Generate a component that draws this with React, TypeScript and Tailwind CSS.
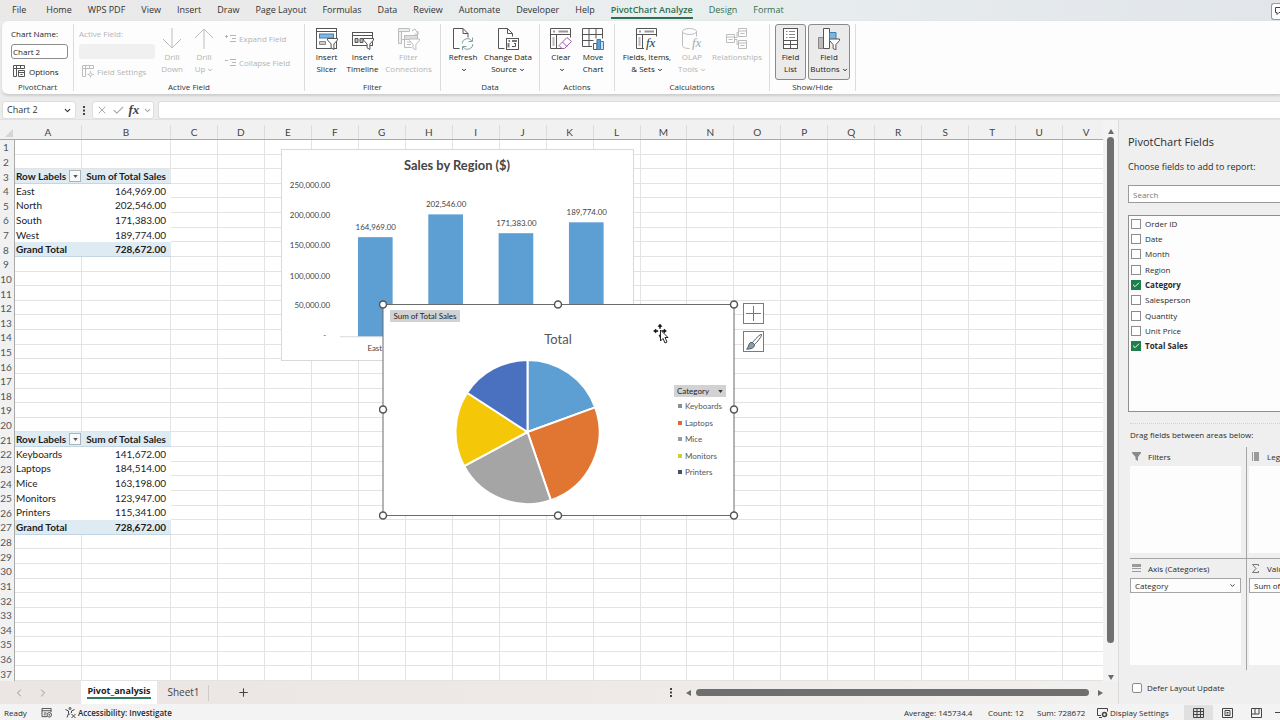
import { useState } from 'react'
import type { ReactNode } from 'react'
import clsx from 'clsx'
import { Check, ChevronDown, ChevronLeft, ChevronRight, Plus, X } from 'lucide-react'

const RIBBON_TABS = [
  'File', 'Home', 'WPS PDF', 'View', 'Insert', 'Draw', 'Page Layout', 'Formulas', 'Data',
  'Review', 'Automate', 'Developer', 'Help', 'PivotChart Analyze', 'Design', 'Format',
]
const CONTEXT_TABS = ['PivotChart Analyze', 'Design', 'Format']

const COLUMNS = 'ABCDEFGHIJKLMNOPQRSTUV'.split('')
const ROWS = Array.from({ length: 37 }, (_, i) => i + 1)

interface PivotRow {
  kind: 'head' | 'body' | 'total'
  label: string
  value: string
}

const PIVOT_ROWS: Record<number, PivotRow> = {
  3: { kind: 'head', label: 'Row Labels', value: 'Sum of Total Sales' },
  4: { kind: 'body', label: 'East', value: '164,969.00' },
  5: { kind: 'body', label: 'North', value: '202,546.00' },
  6: { kind: 'body', label: 'South', value: '171,383.00' },
  7: { kind: 'body', label: 'West', value: '189,774.00' },
  8: { kind: 'total', label: 'Grand Total', value: '728,672.00' },
  21: { kind: 'head', label: 'Row Labels', value: 'Sum of Total Sales' },
  22: { kind: 'body', label: 'Keyboards', value: '141,672.00' },
  23: { kind: 'body', label: 'Laptops', value: '184,514.00' },
  24: { kind: 'body', label: 'Mice', value: '163,198.00' },
  25: { kind: 'body', label: 'Monitors', value: '123,947.00' },
  26: { kind: 'body', label: 'Printers', value: '115,341.00' },
  27: { kind: 'total', label: 'Grand Total', value: '728,672.00' },
}

const REGIONS = [
  { name: 'East', value: 164969 },
  { name: 'North', value: 202546 },
  { name: 'South', value: 171383 },
  { name: 'West', value: 189774 },
]

const CATEGORIES = [
  { name: 'Keyboards', value: 141672, color: '#5e9fd3', key: '#8a8f96' },
  { name: 'Laptops', value: 184514, color: '#e07632', key: '#dd6b2f' },
  { name: 'Mice', value: 163198, color: '#a5a5a5', key: '#9a9a9a' },
  { name: 'Monitors', value: 123947, color: '#f5c709', key: '#cfd02c' },
  { name: 'Printers', value: 115341, color: '#4a70c0', key: '#4a4f62' },
]

const FIELDS = [
  'Order ID', 'Date', 'Month', 'Region', 'Category', 'Salesperson', 'Quantity', 'Unit Price', 'Total Sales',
]

const money = (n: number) => n.toLocaleString('en-US', { minimumFractionDigits: 2 })

/* ---------- Ribbon icons ---------- */

function Icon({ children, className = 'w-[22px] h-[22px]' }: { children: ReactNode; className?: string }) {
  return (
    <svg viewBox="0 0 22 22" fill="none" stroke="#555" className={className} aria-hidden="true">
      {children}
    </svg>
  )
}

const Funnel = ({ x, y, fill = '#fff' }: { x: number; y: number; fill?: string }) => (
  <path d={`M${x} ${y}h10v1.5l-3.6 4v5.5l-2.8-1.6v-3.9l-3.6-4z`} fill={fill} />
)

const SlicerIcon = () => (
  <Icon>
    <rect x=".5" y=".5" width="20" height="20" fill="#fff" />
    <path d="M.5 3.5h20" />
    <rect x="3.5" y="6" width="14" height="4" fill="#83b9e0" stroke="#3c7fb5" />
    <path d="M3.500 13.500h6v3h-6z" fill="#ccc" stroke="#888" />
    <Funnel x={11.5} y={10.5} />
  </Icon>
)

const TimelineIcon = () => (
  <Icon>
    <rect x=".5" y="4.5" width="20" height="13" fill="#fff" />
    <path d="M.5 7.5h20" />
    <path d="M3 10.5h3v4H3zM8 10.5h3v4H8z" fill="#bbb" />
    <path d="M13 10.5h2" />
    <Funnel x={11.5} y={10.5} />
  </Icon>
)

const ConnectionsIcon = () => (
  <Icon>
    <g stroke="#bdbdbd">
      <path d="M.5.5h11v3H.5zM.5 3.5v12h3v-12M7 11.5h-3" fill="#eee" />
      <path d="M14 3l3-2 3 5M20 3v3.500l-3.500-.5" />
      <rect x="6.500" y="7.500" width="13" height="4" fill="#ddd" />
      <path d="M6.500 11.500v8h7M9 14h4M9 16.500h4" />
      <Funnel x={11.5} y={11} />
    </g>
  </Icon>
)

const RefreshIcon = () => (
  <Icon>
    <path d="M7.500 20.500h-6V.5h9.500l5 5v4M11 .5v5h5" />
    <path d="M10 15.500a5.500 5.500 0 0 1 10-2.500M20.500 9.500v4h-4M21 16a5.500 5.500 0 0 1-10 3M10.500 22v-3.500h4" stroke="#7fa3a3" />
  </Icon>
)

const ChangeSourceIcon = () => (
  <Icon>
    <path d="M7.500 20.500h-6V.5h9l5 5v3M10.500.5v5h5" />
    <rect x="9.500" y="10.500" width="12" height="11" fill="#fff" />
    <path d="M11.500 13h1.500M15 13h5M11.500 15v4.500" stroke="#777" strokeWidth="2" />
    <path d="M15 18.500h3.500v-3M17 15.500h2" />
  </Icon>
)

const ClearIcon = () => (
  <Icon>
    <path d="M12 20.500H.5V.5h20v9M.5 6.500h20M6.500 6.500v14" />
    <path d="M3 3.500h2M8.500 3.500h9.500" stroke="#999" strokeWidth="2" />
    <path d="M3.500 9v9" stroke="#bbb" strokeWidth="2" />
    <path d="M10 16.500l7-7 4.500 4-7 7h-2.500l-3-3zM12.500 14l4.500 4.500" fill="#fff" stroke="#9d5cab" />
  </Icon>
)

const MoveChartIcon = () => (
  <Icon>
    <path d="M10 18.500H.5V.5h20v10M.5 6.500h20M.5 12.500h11M7 .5v18M14 .5v10" />
    <path d="M11.500 15.500h3.500v6h-3.500z" fill="#fff" />
    <path d="M15 11.500h3.500v10H15z" fill="#5e9fd3" stroke="#3c7fb5" />
    <path d="M18.500 13.500h3v8h-3z" fill="#cde3f3" stroke="#3c7fb5" />
  </Icon>
)

const FxMark = ({ x, y, color = '#333' }: { x: number; y: number; color?: string }) => (
  <text x={x} y={y} stroke="none" fill={color} className="font-['Liberation_Serif',serif] text-[13px] italic">
    fx
  </text>
)

const FieldsItemsIcon = () => (
  <Icon>
    <path d="M8 20.500H.5V.5h20v8M.5 6.500h20M6.500 6.500v14" />
    <path d="M3 3.500h2M8.500 3.500h9.500" stroke="#999" strokeWidth="2" />
    <path d="M3.500 9v9" stroke="#bbb" strokeWidth="2" />
    <FxMark x={10} y={19} />
  </Icon>
)

const OlapIcon = () => (
  <Icon>
    <g stroke="#bdbdbd">
      <ellipse cx="8.500" cy="3.500" rx="7" ry="3" />
      <path d="M1.500 3.500v14c0 2 3 3 7 3M15.500 3.500v5" />
    </g>
    <FxMark x={11} y={19} color="#aaa" />
  </Icon>
)

const RelationshipsIcon = () => (
  <Icon>
    <g stroke="#bdbdbd">
      <path d="M.5 6.500h8v8h-8zM.5 9h8M12.500.5h8v8h-8zM12.500 3h8M12.500 12.500h8v8h-8zM12.500 15h8M8.500 9.500H11V4.500h1.500M8.500 11.500H11v5h1.500" />
      <path d="M2.500 11.500h4M14.500 5.500h4M14.500 17.500h4" />
    </g>
  </Icon>
)

const FieldListIcon = () => (
  <Icon>
    <rect x="3.500" y=".5" width="14" height="20" fill="#fff" />
    <path d="M3.500 12.500h14M3.500 16.500h14M10.500 12.500v8" />
    <path d="M6 3.500h1.500M9 3.500h6M6 6.500h1.500M9 6.500h6M6 9.500h1.500M9 9.500h6" stroke="#888" />
  </Icon>
)

const FieldButtonsIcon = () => (
  <Icon>
    <path d="M.5 9.500h5v11h-5z" fill="#bbb" stroke="#888" />
    <path d="M5.500.5h6v20h-6z" fill="#fff" />
    <path d="M11.500 4.500h6.500v8h-6.500z" fill="#7db4dd" stroke="#3c7fb5" />
    <Funnel x={11.5} y={11} />
  </Icon>
)

const DrillIcon = ({ up }: { up?: boolean }) => (
  <Icon>
    <path d={up ? 'M11 21V1M2 10l9-9 9 9' : 'M11 0v20M2 11l9 9 9-9'} stroke="#bdbdbd" />
  </Icon>
)

const OptionsIcon = ({ muted, gear }: { muted?: boolean; gear?: boolean }) => (
  <svg viewBox="0 0 13 13" fill="none" stroke={muted ? '#bdbdbd' : '#555'} className="size-[13px]" aria-hidden="true">
    <path d="M.5.5h11v3H.5zM.5 3.500v8h3v-8M3.500.5v3M7.500.5v3" />
    {gear ? (
      <path d="M8.500 6v1.500M8.500 11v1.500M5.500 9.500H7M10.500 9.500H12M7 9.500a1.500 1.500 0 1 0 3 0a1.500 1.500 0 1 0-3 0z" />
    ) : (
      <path d="M5.500 5.500h6v6h-6zM5.500 7.500h6M7.500 9.500h2" />
    )}
  </svg>
)

const ExpandIcon = ({ plus }: { plus?: boolean }) => (
  <svg viewBox="0 0 11 9" fill="none" stroke="#b5b5b5" className="h-[9px] w-[11px]" aria-hidden="true">
    <path d="M0 2.500h3M5 1.500h6M7 4.500h4M5 7.500h6" />
    {plus && <path d="M1.500 1v3" />}
  </svg>
)

/* ---------- Ribbon ---------- */

interface RibbonButtonProps {
  icon: ReactNode
  lines: [string, string?]
  width: string
  menu?: boolean
  disabled?: boolean
  pressed?: boolean
}

function RibbonButton({ icon, lines, width, menu, disabled, pressed }: RibbonButtonProps) {
  const arrow = menu && <ChevronDown className="ml-0.5 inline size-[6px]" strokeWidth={4} />
  return (
    <button
      type="button"
      disabled={disabled}
      aria-pressed={pressed}
      className={clsx(
        'flex h-14 flex-col items-center rounded-[3px] border pt-[3px] whitespace-nowrap',
        width,
        pressed ? 'border-[#8a8a8a] bg-[#ebebeb]' : 'border-transparent',
        disabled ? 'text-[#b4b4b4]' : 'text-[#222]',
      )}
    >
      {icon}
      <span className="mt-px block leading-[12px]">{lines[0]}</span>
      <span className="block leading-[12px]">
        {lines[1]}
        {arrow}
      </span>
    </button>
  )
}

function RibbonGroup({ label, width, children }: { label: string; width: string; children: ReactNode }) {
  return (
    <section aria-label={label} className={clsx('flex shrink-0 flex-col py-[3px]', width)}>
      <div className="flex h-full flex-col border-r border-[#dcdcdc]">
        <div className="flex h-14 shrink-0 justify-center">{children}</div>
        <p className="text-center leading-[13px] text-[#333]">{label}</p>
      </div>
    </section>
  )
}

function Ribbon() {
  return (
    <div className="ml-0.5 flex h-[74px] shrink-0 rounded-l-md border-b border-[#cfcfcf] bg-[#fdfdfd] text-[8px] font-medium shadow-sm">
      <RibbonGroup label="PivotChart" width="w-[72px]">
        <div className="flex w-full flex-col pt-1 pl-[9px] text-[#222]">
          <label htmlFor="chart-name" className="leading-[12px]">Chart Name:</label>
          <input
            id="chart-name"
            defaultValue="Chart 2"
            className="mt-1 h-[15px] w-[57px] rounded-[3px] border border-[#8c8c8c] bg-white px-px"
          />
          <button type="button" className="mt-1.5 flex items-center gap-[3px] pl-0.5 leading-[13px]">
            <OptionsIcon /> Options
          </button>
        </div>
      </RibbonGroup>

      <RibbonGroup label="Active Field" width="w-[231px]">
        <div className="flex w-[82px] flex-col pt-1 pl-[5px] text-[#b4b4b4]">
          <label htmlFor="active-field" className="leading-[12px]">Active Field:</label>
          <input id="active-field" disabled className="mt-1 h-[15px] w-[76px] rounded-[3px] bg-[#f0f0f0]" />
          <button type="button" disabled className="mt-1.5 flex items-center gap-0.5 pl-[3px] leading-[13px] whitespace-nowrap">
            <OptionsIcon muted gear /> Field Settings
          </button>
        </div>
        <RibbonButton icon={<DrillIcon />} lines={['Drill', 'Down']} width="w-8" disabled />
        <RibbonButton icon={<DrillIcon up />} lines={['Drill', 'Up']} width="w-8" menu disabled />
        <div className="flex flex-1 flex-col gap-[11px] pt-2 pl-[5px] text-[#b4b4b4]">
          <button type="button" disabled className="flex items-center gap-[3px] leading-[13px] whitespace-nowrap">
            <ExpandIcon plus /> Expand Field
          </button>
          <button type="button" disabled className="flex items-center gap-[3px] leading-[13px] whitespace-nowrap">
            <ExpandIcon /> Collapse Field
          </button>
        </div>
      </RibbonGroup>

      <RibbonGroup label="Filter" width="w-[136px]">
        <RibbonButton icon={<SlicerIcon />} lines={['Insert', 'Slicer']} width="w-9" />
        <RibbonButton icon={<TimelineIcon />} lines={['Insert', 'Timeline']} width="w-9" />
        <RibbonButton icon={<ConnectionsIcon />} lines={['Filter', 'Connections']} width="w-14" disabled />
      </RibbonGroup>

      <RibbonGroup label="Data" width="w-[99px]">
        <RibbonButton icon={<RefreshIcon />} lines={['Refresh']} width="w-9" menu />
        <RibbonButton icon={<ChangeSourceIcon />} lines={['Change Data', 'Source']} width="w-[54px]" menu />
      </RibbonGroup>

      <RibbonGroup label="Actions" width="w-[75px]">
        <RibbonButton icon={<ClearIcon />} lines={['Clear']} width="w-8" menu />
        <RibbonButton icon={<MoveChartIcon />} lines={['Move', 'Chart']} width="w-8" />
      </RibbonGroup>

      <RibbonGroup label="Calculations" width="w-[155px]">
        <RibbonButton icon={<FieldsItemsIcon />} lines={['Fields, Items,', '& Sets']} width="w-[54px]" menu />
        <RibbonButton icon={<OlapIcon />} lines={['OLAP', 'Tools']} width="w-9" menu disabled />
        <RibbonButton icon={<RelationshipsIcon />} lines={['Relationships']} width="w-[54px]" disabled />
      </RibbonGroup>

      <RibbonGroup label="Show/Hide" width="w-[86px]">
        <div className="flex gap-0.5">
          <RibbonButton icon={<FieldListIcon />} lines={['Field', 'List']} width="w-[31px]" pressed />
          <RibbonButton icon={<FieldButtonsIcon />} lines={['Field', 'Buttons']} width="w-[42px]" menu pressed />
        </div>
      </RibbonGroup>
    </div>
  )
}

function FormulaBar() {
  return (
    <div className="flex h-[25px] shrink-0 items-end border-b border-[#e2e2e2] pl-0.5 text-[9px] text-[#333]">
      <div className="flex h-[18px] w-[74px] items-center rounded-[3px] border border-[#dedede] bg-white pr-[3px]">
        <input aria-label="Name Box" defaultValue="Chart 2" className="w-full min-w-0 flex-1 bg-transparent pl-1" />
        <button type="button" aria-label="Open name list">
          <ChevronDown className="size-[9px]" strokeWidth={3} />
        </button>
      </div>
      <span className="flex h-[18px] w-4 items-center justify-center" aria-hidden="true">
        <Dots />
      </span>
      <div className="flex h-[18px] w-[62px] items-center justify-between rounded-[3px] border border-[#dedede] bg-white pr-px pl-[3px] text-[#aaa]">
        <button type="button" aria-label="Cancel"><X className="size-[12px]" strokeWidth={2} /></button>
        <button type="button" aria-label="Enter"><Check className="size-[13px]" strokeWidth={2} /></button>
        <button type="button" className="font-['Liberation_Serif',serif] text-[13px] font-bold text-[#444] italic">
          fx
        </button>
        <button type="button" aria-label="Recent functions"><ChevronDown className="size-[9px]" strokeWidth={3} /></button>
      </div>
      <input
        aria-label="Formula Bar"
        className="ml-1 h-[18px] min-w-0 flex-1 rounded-l-[3px] border border-r-0 border-[#dedede] bg-white px-1"
      />
    </div>
  )
}

const Dots = () => (
  <svg viewBox="0 0 2 9" className="h-[9px] w-[2px]" fill="#444">
    <path d="M0 0h2v2H0zM0 3.500h2v2H0zM0 7h2v2H0z" />
  </svg>
)

/* ---------- Worksheet ---------- */

const TRACKS =
  'grid grid-cols-[15px_67px_89px_repeat(20,minmax(0,1fr))]'

function SheetRow({ row }: { row: number }) {
  const pivot = PIVOT_ROWS[row]
  const tinted = pivot && pivot.kind !== 'body'
  const cell = pivot
    ? clsx(
        'flex items-center border-b leading-none whitespace-nowrap text-[#1c1c1c]',
        tinted ? 'border-[#c3d6e3] bg-[#dfebf3] font-bold' : 'border-transparent',
      )
    : 'border-r border-b border-[#e3e3e3]'
  return (
    <tr className={TRACKS}>
      <th scope="row" className="flex items-center justify-center border-r border-[#a9a9a9] bg-[#f1f1f1] pr-0.5 leading-none font-normal text-[#555]">
        {row}
      </th>
      <td className={clsx(cell, pivot && 'pl-px')}>
        {pivot?.label}
        {pivot?.kind === 'head' && (
          <button
            type="button"
            aria-label="Filter row labels"
            className="mr-px ml-auto flex size-3 items-center justify-center border border-[#a9b4bb] bg-[#f7f9fa]"
          >
            <svg viewBox="0 0 6 4" className="h-[3px] w-[5px]" fill="#555"><path d="M0 0h6L3 4z" /></svg>
          </button>
        )}
      </td>
      <td className={clsx(cell, pivot && 'justify-end pr-[5px]')}>{pivot?.value}</td>
      {COLUMNS.slice(2).map((c) => (
        <td key={c} className="border-r border-b border-[#e3e3e3]" />
      ))}
    </tr>
  )
}

function Worksheet() {
  return (
    <table className="flex h-full w-[calc(100%+7px)] flex-col bg-white font-['Lato',sans-serif] text-[10px]">
      <thead className="block h-5 shrink-0 border-b border-[#a9a9a9] bg-[#f1f1f1]">
        <tr className={clsx(TRACKS, 'h-full pt-[5px]')}>
          <th className="flex items-end justify-end p-0.5">
            <svg viewBox="0 0 8 8" className="size-2" fill="#d5d5d5"><path d="M8 0v8H0z" /></svg>
          </th>
          {COLUMNS.map((c) => (
            <th key={c} scope="col" className="flex items-center justify-center border-r border-[#dcdcdc] leading-none font-normal text-[#444]">
              {c}
            </th>
          ))}
        </tr>
      </thead>
      <tbody className="grid min-h-0 flex-1 auto-rows-fr">
        {ROWS.map((row) => (
          <SheetRow key={row} row={row} />
        ))}
      </tbody>
    </table>
  )
}

function RegionChart() {
  const baseline = 188
  const scale = 123 / 202546
  return (
    <svg
      viewBox="0 0 353 212"
      role="img"
      aria-label="Sales by Region"
      className="absolute top-[29px] left-[281px] h-[212px] w-[353px] border border-[#d9d9d9] bg-white font-['Lato',sans-serif] text-[8px]"
      fill="#444"
    >
      <text x="176" y="20" textAnchor="middle" className="text-[13px] font-bold">Sales by Region ($)</text>
      {[250000, 200000, 150000, 100000, 50000].map((tick, i) => (
        <text key={tick} x="48" y={38 + Math.round(i * 30.6)} textAnchor="end">{money(tick)}</text>
      ))}
      <text x="44" y="190" textAnchor="end">-</text>
      <path d={`M58 ${baseline + 0.5}H340`} stroke="#d9d9d9" />
      {REGIONS.map((region, i) => {
        const h = Math.round(region.value * scale)
        const x = 76 + i * 71
        return (
          <g key={region.name}>
            <rect x={x} y={baseline - h} width="35" height={h} fill="#5e9fd3" />
            <text x={x + 18} y={baseline - h - 7} textAnchor="middle">{money(region.value)}</text>
            <text x={x + 17} y="203" textAnchor="middle">{region.name}</text>
          </g>
        )
      })}
    </svg>
  )
}

function pieSlices(cx: number, cy: number, r: number) {
  const total = CATEGORIES.reduce((sum, c) => sum + c.value, 0)
  let angle = -Math.PI / 2
  return CATEGORIES.map((c) => {
    const start = angle
    angle += (c.value / total) * Math.PI * 2
    const point = (a: number) => `${cx + r * Math.cos(a)} ${cy + r * Math.sin(a)}`
    return { ...c, d: `M${cx} ${cy}L${point(start)}A${r} ${r} 0 0 1 ${point(angle)}Z` }
  })
}

const HANDLES = [
  [4, 4], [179, 4], [355, 4], [4, 109], [355, 109], [4, 215], [179, 215], [355, 215],
]

function CategoryChart() {
  return (
    <div className="absolute top-[180px] left-[379px] flex items-start gap-1 font-['Lato',sans-serif]">
      <div className="relative">
        <svg viewBox="0 0 360 220" role="img" aria-label="Total by category" className="h-[220px] w-[360px]" fill="#555">
          <rect x="4" y="4.500" width="351" height="211" fill="#fff" stroke="#6b6b6b" />
          <text x="179" y="44" textAnchor="middle" className="text-[13px]">Total</text>
          {pieSlices(148.5, 132, 72).map((s) => (
            <path key={s.name} d={s.d} fill={s.color} stroke="#fff" strokeWidth="2" strokeLinejoin="round" />
          ))}
          {CATEGORIES.map((c, i) => (
            <g key={c.name}>
              <rect x="299" y={104 + Math.round(i * 16.5)} width="4" height="4" fill={c.key} />
              <text x="306" y={109 + Math.round(i * 16.5)} className="text-[8px]">{c.name}</text>
            </g>
          ))}
          {HANDLES.map(([x, y]) => (
            <circle key={`${x}-${y}`} cx={x} cy={y + 0.5} r="3.5" fill="#fff" stroke="#555" strokeWidth="1.5" />
          ))}
        </svg>
        <button type="button" className="absolute top-[10px] left-[11px] h-3 w-[70px] bg-[#d2d2d2] text-[8px] leading-3 whitespace-nowrap text-[#222]">
          Sum of Total Sales
        </button>
        <button
          type="button"
          className="absolute top-[85px] left-[295px] flex h-3 w-[52px] items-center justify-between bg-[#d2d2d2] px-[3px] text-[8px] leading-3 text-[#222]"
        >
          Category
          <svg viewBox="0 0 6 4" className="h-[3px] w-[5px]" fill="#333"><path d="M0 0h6L3 4z" /></svg>
        </button>
        {/* Move pointer */}
        <svg viewBox="0 0 16 20" className="absolute top-6 left-[274px] h-5 w-4" aria-hidden="true">
          <path d="M7 0l2 2.500H5zM.5 7L3 5v4zM13.500 7L11 5v4zM6.500 2h1v2.500h-1zM3 6.500h2v1H3zM9 6.500h2v1H9zM6 11h2l-1 2.500z" fill="#111" stroke="#111" strokeWidth=".5" />
          <path d="M7.500 6v11l2.500-2.500 2 4.500 2-1-2-4.500h3z" fill="#fff" stroke="#222" />
        </svg>
      </div>
      <div className="flex flex-col gap-[7px] pt-[3px]">
        <button type="button" aria-label="Chart elements" className="flex size-[21px] items-center justify-center border border-[#7b7b7b] bg-white">
          <svg viewBox="0 0 15 15" className="size-[15px]" stroke="#777"><path d="M7.500 0v15M0 7.500h15" /></svg>
        </button>
        <button type="button" aria-label="Chart styles" className="flex size-[21px] items-center justify-center border border-[#7b7b7b] bg-white">
          <svg viewBox="0 0 18 18" className="size-[18px]" fill="none" stroke="#555">
            <path d="M16.500 1.500c1 1-5 8.500-7 10l-2-2c1.500-2 8-9 9-8z" fill="#fff" />
            <path d="M7.500 9.500l2 2c.5 3-3.500 5-8 4.500 2.500-1 1.500-5 4-6.500z" fill="#7f9fb8" />
          </svg>
        </button>
      </div>
    </div>
  )
}

const Arrow = ({ d }: { d: string }) => (
  <svg viewBox="0 0 6 6" className="size-1.5 shrink-0" fill="#6b6b6b" aria-hidden="true"><path d={d} /></svg>
)

function SheetTabs() {
  return (
    <div className="flex h-[23px] shrink-0 items-center bg-linear-to-r from-[#ebe6e4] via-[#eee9e6] to-[#f2f0ee] text-[10px]">
      <div className="flex w-[81px] items-center gap-3 pl-[13px] text-[#999]">
        <button type="button" aria-label="Previous sheet"><ChevronLeft className="size-3" /></button>
        <button type="button" aria-label="Next sheet"><ChevronRight className="size-3" /></button>
      </div>
      <button type="button" className="flex h-full w-[76px] justify-center bg-white pt-[3px] text-[9px] font-bold text-[#222]">
        <span className="h-[15px] border-b-2 border-[#2f7d5c] leading-[14px]">Pivot_analysis</span>
      </button>
      <button type="button" className="h-4 w-[52px] border-r border-[#cfcbc8] pl-0.5 text-[#444]">Sheet1</button>
      <button type="button" aria-label="New sheet" className="ml-7 text-[#444]">
        <Plus className="size-[13px]" strokeWidth={2} />
      </button>
      <div className="ml-auto flex w-[448px] items-center gap-1">
        <Dots />
        <span className="ml-2.5 flex"><Arrow d="M5 0v6L0 3z" /></span>
        <span className="h-[7px] w-[393px] rounded-full bg-[#6f6f6f]" />
        <span className="ml-1 flex"><Arrow d="M1 0v6l5-3z" /></span>
      </div>
    </div>
  )
}

/* ---------- PivotChart Fields pane ---------- */

function FieldCheck({ label, checked, onChange }: { label: string; checked: boolean; onChange: () => void }) {
  return (
    <label className={clsx('flex items-center gap-1 leading-none', checked && 'font-bold')}>
      <span className="grid size-[10px]">
        <input
          type="checkbox"
          checked={checked}
          onChange={onChange}
          className="peer col-start-1 row-start-1 size-[10px] appearance-none border border-[#8c8c8c] bg-white checked:border-[#1e7e4c] checked:bg-[#1e7e4c]"
        />
        <Check className="pointer-events-none invisible col-start-1 row-start-1 size-[10px] p-px text-white peer-checked:visible" strokeWidth={3} />
      </span>
      {label}
    </label>
  )
}

interface AreaProps {
  title: string
  icon: ReactNode
  field?: string
  className?: string
}

function Area({ title, icon, field, className }: AreaProps) {
  return (
    <section className={clsx('flex flex-col pr-[5px] pb-[5px]', className)}>
      <h3 className="flex h-[19px] items-center gap-[7px] pl-0.5 whitespace-nowrap">
        <svg viewBox="0 0 9 9" className="size-[9px]" aria-hidden="true">{icon}</svg>
        {title}
      </h3>
      <div className="h-[87px] bg-[#fdfdfd]">
        {field && (
          <div className="flex h-[15px] items-center border border-[#a5a5a5] pr-1">
            <select aria-label={title} className="h-[13px] min-w-0 flex-1 appearance-none pl-1 leading-[13px]">
              <option>{field}</option>
            </select>
            <ChevronDown className="size-[7px]" strokeWidth={3} />
          </div>
        )}
      </div>
    </section>
  )
}

function FieldsPane() {
  const [picked, setPicked] = useState(['Category', 'Total Sales'])
  const [deferred, setDeferred] = useState(false)

  const toggle = (field: string) => {
    setPicked(picked.includes(field) ? picked.filter((f) => f !== field) : [...picked, field])
  }

  return (
    <aside className="flex w-[162px] shrink-0 flex-col overflow-hidden border-l border-[#dcdcdc] bg-[#efefef] pl-[9px] text-[8px] font-medium text-[#2b2b2b]">
      <h2 className="mt-[14px] text-[11px] leading-[16px] font-medium">PivotChart Fields</h2>
      <p className="mt-[10px] text-[9px] leading-[13px]">Choose fields to add to report:</p>
      <input
        type="search"
        aria-label="Search fields"
        placeholder="Search"
        className="mt-3 h-[18px] shrink-0 border border-r-0 border-[#9a9a9a] bg-white px-1 placeholder:text-[#777]"
      />
      <div className="mt-3 h-[197px] shrink-0 border border-r-0 border-[#8f8f8f] bg-[#fdfdfd]">
        <div className="grid h-[138px] auto-rows-fr pl-0.5">
          {FIELDS.map((field) => (
            <FieldCheck key={field} label={field} checked={picked.includes(field)} onChange={() => toggle(field)} />
          ))}
        </div>
      </div>

      <p className="mt-[11px] ml-0.5 border-t border-dotted border-[#cfcfcf] pt-1 leading-[13px]">
        Drag fields between areas below:
      </p>
      <div className="mt-1.5 ml-0.5 grid w-[234px] shrink-0 grid-cols-2">
        <Area
          title="Filters"
          icon={<path d="M0 0h9v1L6 5v4L3.500 7.500V5L0 1z" fill="#8a8a8a" />}
          className="border-r border-b border-[#a5a5a5]"
        />
        <Area
          title="Legend (Series)"
          icon={<path d="M1 0h1v9H1zM3 0h5v9H3z" fill="#9a9a9a" />}
          className="border-b border-[#a5a5a5] pl-0.5"
        />
        <Area
          title="Axis (Categories)"
          icon={<path d="M0 0h9v3H0zM0 4h9v1H0zM0 7h9v1H0z" fill="#9a9a9a" />}
          field="Category"
          className="border-r border-[#a5a5a5]"
        />
        <Area
          title="Values"
          icon={<path d="M7.500 2V.5h-6l3.500 4-3.500 4h6V7" fill="none" stroke="#777" />}
          field="Sum of Total Sales"
          className="pl-0.5"
        />
      </div>

      <label className="mt-[13px] ml-1 flex items-center gap-[5px] leading-none">
        <input
          type="checkbox"
          checked={deferred}
          onChange={() => setDeferred(!deferred)}
          className="size-[10px] appearance-none rounded-[2px] border border-[#8c8c8c] bg-white checked:bg-[#1e7e4c]"
        />
        Defer Layout Update
      </label>
    </aside>
  )
}

function StatusBar() {
  return (
    <footer className="flex h-4 shrink-0 items-center bg-[#f3f3f3] pt-px pl-1 text-[8px] font-medium text-[#2b2b2b]">
      <span className="w-[37px]">Ready</span>
      <svg viewBox="0 0 12 11" className="h-[10px] w-3" fill="none" stroke="#444" aria-hidden="true">
        <path d="M6 9.500H.5v-9h10v4M.5 3h10M2.500 5.500h3M2.500 7.500h2" />
        <circle cx="8.500" cy="7.500" r="2.500" />
        <circle cx="8.500" cy="7.500" r=".5" />
      </svg>
      <button type="button" className="ml-3 flex items-center gap-0.5 font-semibold">
        <svg viewBox="0 0 11 11" className="size-[11px]" fill="none" stroke="#444" aria-hidden="true">
          <circle cx="5" cy="1.500" r="1" />
          <path d="M.5 2.500l3 1.500v2.500l-1.500 4M9.500 2.500l-3 1.500v2M3.500 8L5 6.500M6.500 7l4 4M10.500 7l-4 4" />
        </svg>
        Accessibility: Investigate
      </button>
      <div className="ml-auto flex w-[376px] items-center">
        <span className="w-[84px] whitespace-nowrap">Average: 145734.4</span>
        <span className="w-[49px] whitespace-nowrap">Count: 12</span>
        <span className="w-[60px] whitespace-nowrap">Sum: 728672</span>
        <button type="button" className="flex w-[87px] items-center gap-0.5 whitespace-nowrap">
          <svg viewBox="0 0 11 10" className="h-[10px] w-[11px]" fill="none" stroke="#444" aria-hidden="true">
            <path d="M4 7.500H.5v-7h10v3M2 9.500h3" />
            <circle cx="7.500" cy="6.500" r="2" strokeWidth="1.500" />
          </svg>
          Display Settings
        </button>
        <button type="button" aria-label="Normal view" className="flex h-4 w-[29px] items-center justify-center bg-[#e0e0e0]">
          <svg viewBox="0 0 11 10" className="h-[10px] w-[11px]" fill="none" stroke="#444">
            <path d="M.5.5h10v9H.5zM.5 3.500h10M.5 6.500h10M4 .5v9M7.500.5v9" />
          </svg>
        </button>
        <button type="button" aria-label="Page layout view" className="flex h-4 w-[29px] items-center justify-center">
          <svg viewBox="0 0 11 10" className="h-[10px] w-[11px]" fill="none" stroke="#444">
            <path d="M.5.5h10v9H.5zM3 2.500h5v5H3zM4.500 4.500h2M4.500 6h2" />
          </svg>
        </button>
        <button type="button" aria-label="Page break preview" className="flex h-4 w-[29px] items-center justify-center">
          <svg viewBox="0 0 11 10" className="h-[10px] w-[11px]" fill="none" stroke="#444">
            <path d="M.5.5h10v9H.5zM4 .5v5.500h4V.5M.5 6h3.500" />
          </svg>
        </button>
        <button type="button" aria-label="Zoom out" className="ml-1 h-px w-[5px] bg-[#444]" />
      </div>
    </footer>
  )
}

export default function App() {
  return (
    <div className="flex h-screen flex-col overflow-hidden bg-[#ececec] font-['Open_Sans',sans-serif]">
      <nav className="flex h-[21px] shrink-0 items-center gap-4 bg-linear-to-r from-[#ebe8e8] via-[#e9eeee] to-[#e2e6eb] pt-px pl-3 text-[9px] font-medium text-[#333]">
        {RIBBON_TABS.map((tab) => (
          <button
            key={tab}
            type="button"
            className={clsx(
              'h-4 border-b-2 whitespace-nowrap',
              tab === 'File' && 'mr-1',
              tab === 'PivotChart Analyze' ? 'border-[#2f7050] font-semibold' : 'border-transparent',
              CONTEXT_TABS.includes(tab) && 'text-[#2f7050]',
            )}
          >
            {tab}
          </button>
        ))}
        <button type="button" aria-label="Comments" className="ml-auto flex h-[17px] w-[9px] items-center overflow-hidden rounded-l-[3px] border border-r-0 border-[#9a9a9a] bg-white pl-[3px]">
          <svg viewBox="0 0 8 8" className="size-2 shrink-0" fill="none" stroke="#444"><path d="M8 .5H.5v5H2v2l2-2h4" /></svg>
        </button>
      </nav>
      <Ribbon />
      <FormulaBar />
      <div className="flex min-h-0 flex-1">
        <main className="flex min-w-0 flex-1 flex-col">
          <div className="flex min-h-0 flex-1">
            <div className="relative min-w-0 flex-1 overflow-hidden">
              <Worksheet />
              <RegionChart />
              <CategoryChart />
            </div>
            <div className="flex w-[15px] shrink-0 flex-col items-center bg-[#f3f3f3] pt-2" aria-hidden="true">
              <Arrow d="M0 6h6L3 1z" />
              <span className="mt-[3px] mb-8 w-[7px] flex-1 rounded-full bg-[#6f6f6f]" />
              <Arrow d="M0 0h6L3 5z" />
            </div>
          </div>
          <SheetTabs />
        </main>
        <FieldsPane />
      </div>
      <StatusBar />
    </div>
  )
}
